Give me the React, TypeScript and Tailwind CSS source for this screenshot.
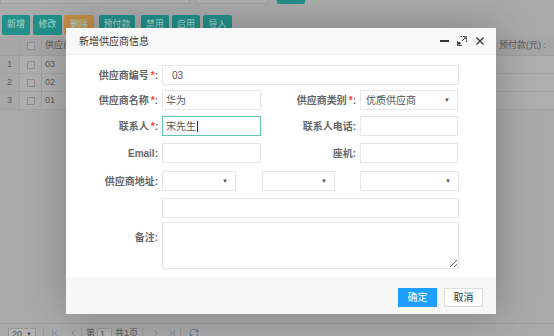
import { ChevronFirst, ChevronLeft, ChevronRight, ChevronLast, RefreshCw } from "lucide-react"

const tools = [
  { label: "新增", cls: "w-[28px] ml-[2px] bg-[#23908a]" },
  { label: "修改", cls: "w-[29px] ml-[3px] bg-[#23908a]" },
  { label: "删除", cls: "w-[30px] ml-[2px] bg-[#c48c46]" },
  { label: "预付款", cls: "w-[36px] ml-[5px] bg-[#23908a]" },
  { label: "禁用", cls: "w-[28px] ml-[6px] bg-[#23908a]" },
  { label: "启用", cls: "w-[28px] ml-[3px] bg-[#23908a]" },
  { label: "导入", cls: "w-[29px] ml-[3px] bg-[#23908a]" },
]

const rows = ["03", "02", "01"]

const Label = ({ text, req, w }: { text: string; req?: boolean; w: string }) => (
  <div className={`${w} shrink-0 pr-[4px] text-right text-[10px] font-bold text-[#666]`}>
    {text}
    {req && <span className="ml-[2px] text-[#ff3b30]">*</span>}:
  </div>
)

const Input = ({ w, value, focus, pad }: { w: string; value?: string; focus?: boolean; pad?: string }) => (
  <div
    className={`${w} h-[20px] shrink-0 flex items-center border bg-white text-[10px] text-[#555] ${
      focus ? "border-[#5fc3ad]" : "border-[#e6e6e6]"
    } ${pad || "pl-[3px]"}`}
  >
    {value}
    {focus && <span className="ml-px h-[11px] w-px bg-[#333]" />}
  </div>
)

const Select = ({ w, value }: { w: string; value?: string }) => (
  <div className={`${w} h-[20px] shrink-0 flex items-center justify-between border border-[#e6e6e6] bg-white pl-[5px] pr-[7px] text-[10px] text-[#555]`}>
    <span>{value}</span>
    <span className="text-[6px] text-[#555]">▼</span>
  </div>
)

const Modal = () => (
  <div className="absolute left-[66px] top-[28px] flex h-[286px] w-[430px] flex-col bg-white shadow-[1px_1px_40px_rgba(0,0,0,0.25)]">
    <div className="flex h-[27px] shrink-0 items-center justify-between border-b border-[#eee] bg-[#f8f8f8] pl-[13px] pr-[12px]">
      <span className="text-[10px] text-[#333]">新增供应商信息</span>
      <div className="flex items-center">
        <span className="h-[2px] w-[9px] bg-[#333]" />
        <svg className="ml-[8px]" width="10" height="10" viewBox="0 0 10 10" fill="none" stroke="#444" strokeWidth="1">
          <path d="M3.5 0.5H9.5V6.5" strokeDasharray="1.5 1" />
          <path d="M0.5 5V9.5H5" />
          <path d="M5 5L9 1M6.5 1H9V3.5" />
          <rect x="1" y="6" width="2.5" height="2.5" fill="#444" stroke="none" />
        </svg>
        <svg className="ml-[9px]" width="8" height="8" viewBox="0 0 8 8" stroke="#333" strokeWidth="1.3">
          <path d="M0.5 0.5L7.5 7.5M7.5 0.5L0.5 7.5" />
        </svg>
      </div>
    </div>

    <div className="flex flex-1 flex-col pt-[10px]">
      <div className="flex items-center">
        <Label text="供应商编号" req w="w-[96px]" />
        <Input w="w-[297px]" value="03" pad="pl-[9px]" />
      </div>
      <div className="mt-[5px] flex items-center">
        <Label text="供应商名称" req w="w-[96px]" />
        <Input w="w-[99px]" value="华为" />
        <Label text="供应商类别" req w="w-[99px]" />
        <Select w="w-[98px]" value="优质供应商" />
      </div>
      <div className="mt-[6px] flex items-center">
        <Label text="联系人" req w="w-[96px]" />
        <Input w="w-[99px]" value="宋先生" focus />
        <Label text="联系人电话" w="w-[99px]" />
        <Input w="w-[98px]" />
      </div>
      <div className="mt-[7px] flex items-center">
        <Label text="Email" w="w-[96px]" />
        <Input w="w-[99px]" />
        <Label text="座机" w="w-[99px]" />
        <Input w="w-[98px]" />
      </div>
      <div className="mt-[8px] flex items-center">
        <Label text="供应商地址" w="w-[96px]" />
        <Select w="w-[74px]" />
        <div className="ml-[26px]">
          <Select w="w-[73px]" />
        </div>
        <div className="ml-[25px]">
          <Select w="w-[99px]" />
        </div>
      </div>
      <div className="mt-[7px] flex items-center pl-[96px]">
        <Input w="w-[297px]" />
      </div>
      <div className="mt-[4px] flex items-start">
        <div className="pt-[8px]">
          <Label text="备注" w="w-[96px]" />
        </div>
        <textarea className="h-[47px] w-[297px] border border-[#e6e6e6] bg-white outline-none" />
      </div>
    </div>

    <div className="flex h-[37px] shrink-0 items-start justify-end gap-[7px] bg-[#f7f7f7] pr-[13px] pt-[11px]">
      <button className="h-[19px] w-[39px] bg-[#1e9fff] text-[10px] text-white">确定</button>
      <button className="h-[19px] w-[39px] border border-[#dedede] bg-white text-[10px] text-[#333]">取消</button>
    </div>
  </div>
)

export default function App() {
  return (
    <div className="relative h-[336px] w-[554px] overflow-hidden bg-[#aaaaaa] font-['Liberation_Sans','Noto_Sans_CJK_SC',sans-serif]">
      <div className="flex h-full flex-col">
        <div className="-mt-[20px] flex h-[24px] shrink-0">
          <div className="w-[190px] border border-[#9d9d9d] bg-[#b0b0b0]" />
          <div className="ml-[6px] w-[72px] border border-[#9d9d9d] bg-[#b0b0b0]" />
          <div className="ml-[9px] w-[28px] rounded-[2px] bg-[#23908a]" />
        </div>

        <div className="mt-[11px] flex h-[20px] shrink-0">
          {tools.map((t) => (
            <div key={t.label} className={`${t.cls} flex items-center justify-center rounded-[2px] text-[9px] text-[#a6d6d2]`}>
              {t.label}
            </div>
          ))}
        </div>

        <div className="mt-[2px] shrink-0 text-[9px] text-[#5a5a5a]">
          <div className="flex h-[19px] items-center border-b border-[#9f9f9f] bg-[#a6a6a6]">
            <div className="h-full w-[20px] border-r border-[#9f9f9f]" />
            <div className="flex h-full w-[22px] items-center justify-center border-r border-[#9f9f9f]">
              <span className="h-[8px] w-[8px] border border-[#8e8e8e] bg-[#b0b0b0]" />
            </div>
            <div className="w-[24px] overflow-hidden whitespace-nowrap pl-[3px]">供应商编号</div>
            <div className="ml-auto pr-[8px]">预付款(元) :</div>
          </div>
          {rows.map((r, i) => (
            <div key={r} className="flex h-[18px] items-center border-b border-[#a2a2a2] bg-[#afafaf]">
              <div className="flex h-full w-[20px] items-center justify-center border-r border-[#a0a0a0] bg-[#a8a8a8]">{i + 1}</div>
              <div className="flex h-full w-[22px] items-center justify-center border-r border-[#a0a0a0]">
                <span className="h-[8px] w-[8px] border border-[#8e8e8e] bg-[#b0b0b0]" />
              </div>
              <div className="pl-[3px]">{r}</div>
            </div>
          ))}
        </div>

        <div className="mt-auto flex h-[13px] shrink-0 items-start border-t border-[#9f9f9f] pl-[8px] pt-[4px] text-[9px] text-[#555]">
          <div className="flex h-[12px] w-[28px] shrink-0 items-start justify-between border border-[#999] bg-[#b3b3b3] px-[3px] leading-[11px]">
            20<span className="text-[6px]">▼</span>
          </div>
          <div className="ml-[7px] h-[10px] w-px shrink-0 bg-[#999]" />
          <ChevronFirst className="ml-[6px] h-[10px] w-[10px] shrink-0 text-[#6a86a4]" />
          <ChevronLeft className="ml-[8px] h-[10px] w-[10px] shrink-0 text-[#6a86a4]" />
          <div className="ml-[3px] h-[10px] w-px shrink-0 bg-[#999]" />
          <span className="ml-[4px] leading-[11px]">第</span>
          <div className="ml-[2px] h-[12px] w-[15px] shrink-0 border border-[#999] bg-[#b3b3b3] pl-[2px] leading-[11px]">1</div>
          <span className="ml-[3px] leading-[11px]">共1页</span>
          <div className="ml-[4px] h-[10px] w-px shrink-0 bg-[#999]" />
          <ChevronRight className="ml-[8px] h-[10px] w-[10px] shrink-0 text-[#6a86a4]" />
          <ChevronLast className="ml-[6px] h-[10px] w-[10px] shrink-0 text-[#6a86a4]" />
          <div className="ml-[3px] h-[10px] w-px shrink-0 bg-[#999]" />
          <RefreshCw className="ml-[8px] h-[10px] w-[10px] shrink-0 text-[#4a78a8]" />
        </div>
      </div>

      <Modal />
    </div>
  )
}
